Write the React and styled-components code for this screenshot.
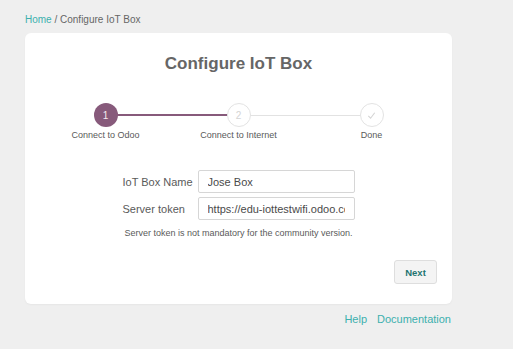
import React from 'react';
import styled, { createGlobalStyle } from 'styled-components';

const GlobalStyle = createGlobalStyle`
    html, body {
        margin: 0;
        padding: 0;
        background: #efefef;
        font-family: "Liberation Sans", Arial, sans-serif;
    }
`;

const Page = styled.div`
    width: 513px;
    height: 349px;
    box-sizing: border-box;
    padding: 14px 0 0 25px;
    background: #efefef;
`;

const Wrapper = styled.div`
    width: 427px;
`;

const Breadcrumb = styled.div`
    font-size: 10px;
    line-height: 12px;
    color: #666;
    margin-bottom: 7px;
`;

const Link = styled.a`
    color: #3cb0ae;
    text-decoration: none;
`;

const Card = styled.section`
    background: #fff;
    border-radius: 6px;
    padding: 21px 15px 20px;
    box-shadow: 0 1px 2px rgba(0, 0, 0, 0.04);
    display: flex;
    flex-direction: column;
    align-items: center;
`;

const Title = styled.h2`
    margin: 0;
    font-size: 17px;
    line-height: 20px;
    font-weight: bold;
    color: #666;
`;

const Stepper = styled.div`
    display: grid;
    grid-template-columns: repeat(3, 133px);
    margin-top: 29px;
`;

const Step = styled.div`
    display: flex;
    flex-direction: column;
    align-items: center;
`;

const CircleSlot = styled.div`
    position: relative;
    width: 100%;
    height: 24px;
    display: flex;
    justify-content: center;

    &::after {
        content: '';
        display: ${props => (props.last ? 'none' : 'block')};
        position: absolute;
        left: 50%;
        width: 133px;
        top: ${props => (props.done ? '11px' : '12px')};
        height: ${props => (props.done ? '2px' : '1px')};
        background: ${props => (props.done ? '#875a7b' : '#e2e2e2')};
    }
`;

const Circle = styled.div`
    position: relative;
    z-index: 1;
    width: 24px;
    height: 24px;
    box-sizing: border-box;
    border-radius: 50%;
    display: flex;
    align-items: center;
    justify-content: center;
    font-size: 10px;
    background: ${props => (props.active ? '#875a7b' : '#fff')};
    border: ${props => (props.active ? 'none' : '1.5px solid #e3e3e3')};
    color: ${props => (props.active ? '#f3e9f0' : '#d4d4d4')};
`;

const StepLabel = styled.div`
    margin-top: 3px;
    font-size: 9px;
    line-height: 11px;
    color: #5a5a5a;
    white-space: nowrap;
`;

const Form = styled.div`
    display: grid;
    grid-template-columns: 75px 157px;
    row-gap: 4px;
    align-items: center;
    margin-top: 29px;
`;

const FieldLabel = styled.label`
    font-size: 11px;
    color: #5a5a5a;
`;

const Input = styled.input`
    height: 23px;
    box-sizing: border-box;
    border: 1px solid #d6d6d6;
    border-radius: 2px;
    padding: 0 9px;
    font-family: inherit;
    font-size: 11px;
    color: #4a4a4a;
    outline: none;
    width: 100%;
`;

const Note = styled.p`
    margin: 8px 0 0;
    font-size: 9px;
    line-height: 11px;
    color: #5a5a5a;
`;

const Actions = styled.div`
    align-self: stretch;
    display: flex;
    justify-content: flex-end;
    margin-top: 21px;
`;

const NextButton = styled.button`
    width: 43px;
    height: 24px;
    background: #f4f4f4;
    border: 1px solid #dedede;
    border-radius: 3px;
    font-family: inherit;
    font-size: 9.5px;
    font-weight: bold;
    color: #1f7471;
    padding: 0;
    cursor: pointer;
`;

const Footer = styled.div`
    display: flex;
    justify-content: flex-end;
    gap: 10px;
    margin-top: 9px;
    padding-right: 1px;
    font-size: 11px;
    line-height: 13px;
`;

const steps = [
    { label: 'Connect to Odoo', content: '1', active: true, done: true },
    { label: 'Connect to Internet', content: '2' },
    { label: 'Done', check: true, last: true },
];

const Check = () => (
    <svg width="11" height="11" viewBox="0 0 12 12" fill="none" stroke="#d4d4d4" strokeWidth="1.2">
        <path d="M2.5 6.5 L5 9 L9.5 3" />
    </svg>
);

export default function App() {
    return (
        <Page>
            <GlobalStyle />
            <Wrapper>
                <Breadcrumb>
                    <Link href="#">Home</Link> / Configure IoT Box
                </Breadcrumb>
                <Card>
                    <Title>Configure IoT Box</Title>
                    <Stepper>
                        {steps.map(step => (
                            <Step key={step.label}>
                                <CircleSlot done={step.done} last={step.last}>
                                    <Circle active={step.active}>
                                        {step.check ? <Check /> : step.content}
                                    </Circle>
                                </CircleSlot>
                                <StepLabel>{step.label}</StepLabel>
                            </Step>
                        ))}
                    </Stepper>
                    <Form>
                        <FieldLabel>IoT Box Name</FieldLabel>
                        <Input defaultValue="Jose Box" />
                        <FieldLabel>Server token</FieldLabel>
                        <Input defaultValue="https://edu-iottestwifi.odoo.com" />
                    </Form>
                    <Note>Server token is not mandatory for the community version.</Note>
                    <Actions>
                        <NextButton>Next</NextButton>
                    </Actions>
                </Card>
                <Footer>
                    <Link href="#">Help</Link>
                    <Link href="#">Documentation</Link>
                </Footer>
            </Wrapper>
        </Page>
    );
}
